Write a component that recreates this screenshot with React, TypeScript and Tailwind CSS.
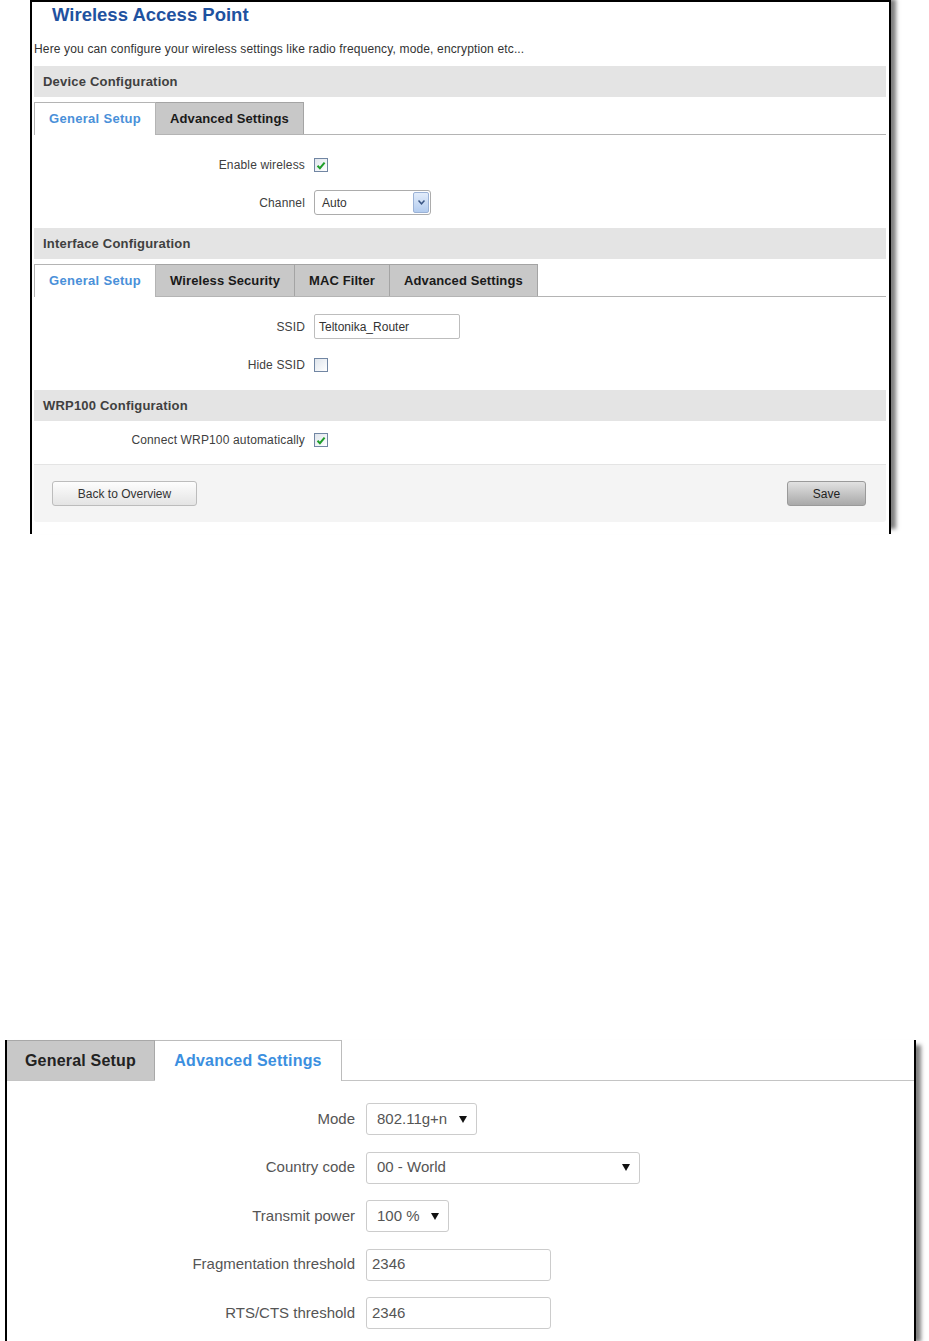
import React from 'react'

function Check({ checked }: { checked: boolean }) {
  return (
    <span className="flex h-[14px] w-[14px] items-center justify-center border border-[#7186a3] bg-gradient-to-br from-[#dfe5ec] to-white">
      {checked && (
        <svg width="10" height="9" viewBox="0 0 10 9">
          <path d="M1.5 4.8 L3.9 7.2 L8.6 1.6" fill="none" stroke="#1f9e2a" strokeWidth="2" />
        </svg>
      )}
    </span>
  )
}

function Bar({ title }: { title: string }) {
  return (
    <div className="flex h-[31px] items-center bg-[#e4e4e4] pl-[9px] text-[13px] font-bold tracking-[0.2px] text-[#404040]">
      {title}
    </div>
  )
}

function Tabs({ items, active }: { items: string[]; active: number }) {
  return (
    <div className="mt-[5px] flex h-[33px] border-b border-[#b4b4b4]">
      {items.map((t, i) =>
        i === active ? (
          <div
            key={t}
            className="-mb-px flex h-[33px] items-center border-x border-t border-[#b4b4b4] bg-white px-[14px] text-[13px] font-bold tracking-[0.3px] text-[#4a90d9]"
          >
            {t}
          </div>
        ) : (
          <div
            key={t}
            className="flex h-[32px] items-center border-r border-t border-[#a4a4a4] bg-[#c8c8c8] px-[14px] text-[13px] font-bold tracking-[0.1px] text-[#1a1a1a]"
          >
            {t}
          </div>
        ),
      )}
    </div>
  )
}

function Row({ label, h, children }: { label: string; h: string; children: React.ReactNode }) {
  return (
    <div className={`flex items-center ${h}`}>
      <div className="w-[271px] text-right text-[12px] tracking-[0.15px] text-[#404040]">{label}</div>
      <div className="ml-[9px] flex items-center">{children}</div>
    </div>
  )
}

function BigRow({ label, children }: { label: string; children: React.ReactNode }) {
  return (
    <div className="flex h-[32px] items-center">
      <div className="w-[348px] text-right text-[15px] text-[#555]">{label}</div>
      <div className="ml-[11px] flex items-center">{children}</div>
    </div>
  )
}

function BigSelect({ value, w }: { value: string; w: string }) {
  return (
    <div className={`flex h-[32px] items-center justify-between rounded-[3px] border border-[#cccccc] bg-white pl-[10px] pr-[9px] text-[15px] text-[#555] ${w}`}>
      <span>{value}</span>
      <svg width="8" height="7" viewBox="0 0 8 7">
        <path d="M0 0 H8 L4 7 Z" fill="#111" />
      </svg>
    </div>
  )
}

function BigInput({ value }: { value: string }) {
  return (
    <div className="flex h-[32px] w-[185px] items-center rounded-[3px] border border-[#cccccc] bg-white pl-[5px] text-[15px] text-[#555]">
      {value}
    </div>
  )
}

export default function App() {
  return (
    <div className="h-[1341px] w-[929px] overflow-hidden bg-white font-['Liberation_Sans',Arial,sans-serif]">
      <div className="ml-[30px] h-[534px] w-[861px] border-2 border-b-0 border-black pl-[2px] pr-[3px] shadow-[7px_-3px_4px_-2px_rgba(0,0,0,0.5)]">
        <div className="flex h-[26px] items-center pl-[18px] text-[18.5px] font-bold text-[#1f52a0]">Wireless Access Point</div>
        <div className="mt-[13px] h-[16px] text-[12px] leading-[16px] tracking-[0.15px] text-[#333]">
          Here you can configure your wireless settings like radio frequency, mode, encryption etc...
        </div>
        <div className="mt-[9px]">
          <Bar title="Device Configuration" />
        </div>
        <Tabs items={['General Setup', 'Advanced Settings']} active={0} />
        <div className="flex flex-col gap-[14px] pb-[13px] pt-[19px]">
          <Row label="Enable wireless" h="h-[22px]">
            <Check checked />
          </Row>
          <Row label="Channel" h="h-[25px]">
            <div className="flex h-[25px] w-[117px] items-center justify-between rounded-[3px] border border-[#acacac] bg-white pl-[7px] pr-[1px] text-[12px] text-[#333]">
              <span>Auto</span>
              <span className="flex h-[21px] w-[16px] items-center justify-center rounded-[2px] border border-[#9bb2d6] bg-gradient-to-b from-[#e2ecfa] to-[#b3ccef]">
                <svg width="7" height="5" viewBox="0 0 7 5">
                  <path d="M0.5 0.5 L3.5 3.8 L6.5 0.5" fill="none" stroke="#3a5584" strokeWidth="1.5" />
                </svg>
              </span>
            </div>
          </Row>
        </div>
        <Bar title="Interface Configuration" />
        <Tabs items={['General Setup', 'Wireless Security', 'MAC Filter', 'Advanced Settings']} active={0} />
        <div className="flex flex-col gap-[15px] pb-[14px] pt-[17px]">
          <Row label="SSID" h="h-[25px]">
            <div className="flex h-[25px] w-[146px] items-center rounded-[2px] border border-[#bdbdbd] bg-white pl-[4px] text-[12px] text-[#333]">
              Teltonika_Router
            </div>
          </Row>
          <Row label="Hide SSID" h="h-[22px]">
            <Check checked={false} />
          </Row>
        </div>
        <Bar title="WRP100 Configuration" />
        <div className="pb-[13px] pt-[8px]">
          <Row label="Connect WRP100 automatically" h="h-[22px]">
            <Check checked />
          </Row>
        </div>
        <div className="flex h-[58px] items-center justify-between rounded-b-[3px] border-t border-[#e4e4e4] bg-[#f4f4f4] pl-[18px] pr-[20px]">
          <button className="flex h-[25px] w-[145px] items-center justify-center rounded-[3px] border border-[#bcbcbc] bg-gradient-to-b from-[#fdfdfd] to-[#e4e4e4] text-[12px] text-[#333]">
            Back to Overview
          </button>
          <button className="flex h-[25px] w-[79px] items-center justify-center rounded-[3px] border border-[#9a9a9a] bg-gradient-to-b from-[#e2e2e2] to-[#a9a9a9] text-[12px] text-[#222]">
            Save
          </button>
        </div>
      </div>

      <div className="ml-[5px] mt-[506px] h-[301px] w-[911px] border-x-2 border-black shadow-[7px_3px_4px_-2px_rgba(0,0,0,0.5)]">
        <div className="flex h-[41px] border-b border-[#c4c4c4]">
          <div className="flex h-[40px] w-[148px] items-center justify-center border-r border-t border-[#a8a8a8] bg-[#c8c8c8] text-[16px] font-bold tracking-[0.2px] text-[#222]">
            General Setup
          </div>
          <div className="-mb-px flex h-[41px] w-[187px] items-center justify-center border-r border-t border-[#bcbcbc] bg-white text-[16px] font-bold tracking-[0.2px] text-[#3b8fe0]">
            Advanced Settings
          </div>
        </div>
        <div className="flex flex-col gap-[16.5px] pt-[22px]">
          <BigRow label="Mode">
            <BigSelect value="802.11g+n" w="w-[111px]" />
          </BigRow>
          <BigRow label="Country code">
            <BigSelect value="00 - World" w="w-[274px]" />
          </BigRow>
          <BigRow label="Transmit power">
            <BigSelect value="100 %" w="w-[83px]" />
          </BigRow>
          <BigRow label="Fragmentation threshold">
            <BigInput value="2346" />
          </BigRow>
          <BigRow label="RTS/CTS threshold">
            <BigInput value="2346" />
          </BigRow>
        </div>
      </div>
    </div>
  )
}
